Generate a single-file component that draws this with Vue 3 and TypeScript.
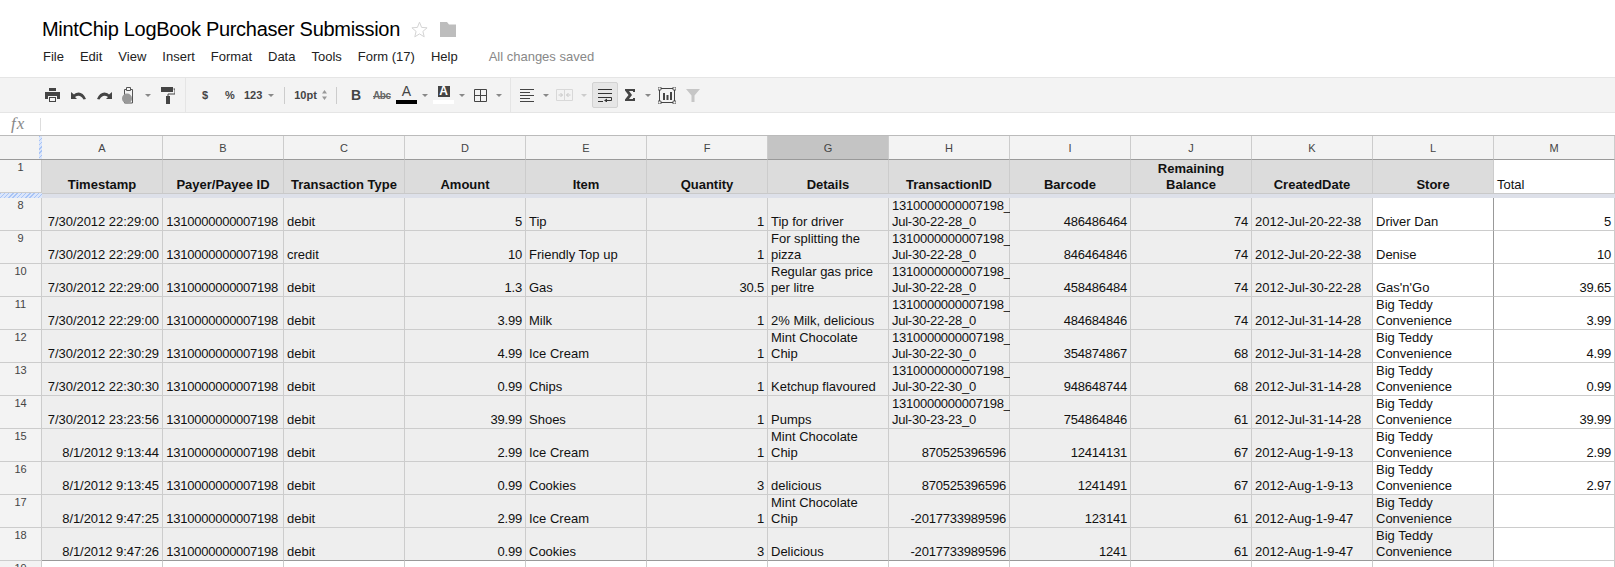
<script setup lang="ts">
interface Row {
  num: number
  cells: (string | number)[]
}
const columns = ['A', 'B', 'C', 'D', 'E', 'F', 'G', 'H', 'I', 'J', 'K', 'L', 'M']
const menus = ['File', 'Edit', 'View', 'Insert', 'Format', 'Data', 'Tools', 'Form (17)', 'Help']
const headers = ['Timestamp', 'Payer/Payee ID', 'Transaction Type', 'Amount', 'Item', 'Quantity', 'Details', 'TransactionID', 'Barcode', 'Remaining Balance', 'CreatedDate', 'Store']
const payer = '1310000000007198'
const tid = (s: string) => `${payer}_\nJul-30-${s}_0`
const teddy = 'Big Teddy Convenience'
const rows: Row[] = [
  [8, '7/30/2012 22:29:00', 'debit', 5, 'Tip', 1, 'Tip for driver', tid('22-28'), 486486464, 74, '2012-Jul-20-22-38', 'Driver Dan', 5],
  [9, '7/30/2012 22:29:00', 'credit', 10, 'Friendly Top up', 1, 'For splitting the pizza', tid('22-28'), 846464846, 74, '2012-Jul-20-22-38', 'Denise', 10],
  [10, '7/30/2012 22:29:00', 'debit', 1.3, 'Gas', 30.5, 'Regular gas price per litre', tid('22-28'), 458486484, 74, '2012-Jul-30-22-28', "Gas'n'Go", 39.65],
  [11, '7/30/2012 22:29:00', 'debit', 3.99, 'Milk', 1, '2% Milk, delicious', tid('22-28'), 484684846, 74, '2012-Jul-31-14-28', teddy, 3.99],
  [12, '7/30/2012 22:30:29', 'debit', 4.99, 'Ice Cream', 1, 'Mint Chocolate Chip', tid('22-30'), 354874867, 68, '2012-Jul-31-14-28', teddy, 4.99],
  [13, '7/30/2012 22:30:30', 'debit', 0.99, 'Chips', 1, 'Ketchup flavoured', tid('22-30'), 948648744, 68, '2012-Jul-31-14-28', teddy, 0.99],
  [14, '7/30/2012 23:23:56', 'debit', 39.99, 'Shoes', 1, 'Pumps', tid('23-23'), 754864846, 61, '2012-Jul-31-14-28', teddy, 39.99],
  [15, '8/1/2012 9:13:44', 'debit', 2.99, 'Ice Cream', 1, 'Mint Chocolate Chip', 870525396596, 12414131, 67, '2012-Aug-1-9-13', teddy, 2.99],
  [16, '8/1/2012 9:13:45', 'debit', 0.99, 'Cookies', 3, 'delicious', 870525396596, 1241491, 67, '2012-Aug-1-9-13', teddy, 2.97],
  [17, '8/1/2012 9:47:25', 'debit', 2.99, 'Ice Cream', 1, 'Mint Chocolate Chip', -2017733989596, 123141, 61, '2012-Aug-1-9-47', teddy, ''],
  [18, '8/1/2012 9:47:26', 'debit', 0.99, 'Cookies', 3, 'Delicious', -2017733989596, 1241, 61, '2012-Aug-1-9-47', teddy, ''],
].map((r) => {
  const [num, ts, ...rest] = r
  return { num: num as number, cells: [ts, payer, ...rest] as (string | number)[] }
})
function cellClass(row: Row, i: number): string[] {
  const c: string[] = ['cell']
  const v = row.cells[i]
  if (i === 0 || i === 1 || typeof v === 'number') c.push('right')
  if (i === 0) c.push('stamp')
  if (i === 1) c.push('payer')
  if (i === 7 && typeof v === 'string') c.push('tid')
  if (i < 11 || (i === 11 && row.num >= 17)) c.push('shaded')
  if (i === 11) c.push('edge')
  if (row.num === 18 && i <= 11) c.push('last')
  return c
}
</script>

<template>
  <div class="page">
    <header class="top">
      <div class="title-line">
        <h1 class="title">MintChip LogBook Purchaser Submission</h1>
        <svg class="star" width="17" height="17" viewBox="0 0 17 17"><path d="M8.5 1.2l2.1 5.2 5.5.4-4.2 3.6 1.3 5.4-4.7-2.9-4.7 2.9 1.3-5.4L.9 6.8l5.5-.4z" fill="none" stroke="#d4d4d4" /></svg>
        <svg class="folder" width="16" height="15" viewBox="0 0 16 15"><path d="M0 0h7l2 2.5h7V15H0z" fill="#bdbdbd" /></svg>
      </div>
      <nav class="menu">
        <span v-for="m in menus" :key="m">{{ m }}</span>
        <span class="saved">All changes saved</span>
      </nav>
    </header>

    <div class="toolbar">
      <svg class="g0" width="15" height="14" viewBox="0 0 15 14"><path d="M4 0h7v3H4zM0 4h15v7h-3V8H3v3H0zM4 9h7v5H4z" fill="#444" /><path d="M5 10h5v3H5z" fill="#f3f3f3" /></svg>
      <svg class="g11" width="15" height="9" viewBox="0 0 15 9"><path d="M0 1v7h6L4 6c3-2 6-2 8.500 2.500L15 8C12 1 7 0 3 3.500z" fill="#444" /></svg>
      <svg class="g11" width="15" height="9" viewBox="0 0 15 9"><path d="M15 1v7H9l2-2C8 4 5 4 2.500 8.500L0 8C3 1 8 0 12 3.500z" fill="#444" /></svg>
      <svg class="g10" width="13" height="18" viewBox="0 0 13 18"><path d="M2.500 3.500h8v13.500h-8z" fill="none" stroke="#555" /><path d="M4.500 1.500h4v3h-4z" fill="#f3f3f3" stroke="#555" /><ellipse cx="5" cy="12.500" rx="5" ry="5" fill="#999" /></svg>
      <i class="arrow g10"></i>
      <svg class="g10" width="14" height="17" viewBox="0 0 14 17"><path d="M0 0h12v5H0z" fill="#444" /><path d="M12.500 2H14v5H7v2.500" fill="none" stroke="#444" /><path d="M5 9h4v8H5z" fill="#444" /></svg>
      <i class="sep g10"></i>
      <b class="tx g15 w8">$</b>
      <b class="tx g16 w8">%</b>
      <b class="tx g11 w18">123</b>
      <i class="arrow g6"></i>
      <i class="sep short g10"></i>
      <b class="tx g9 w23">10pt</b>
      <svg class="g5" width="5" height="10" viewBox="0 0 5 10"><path d="M2.500 0L5 3.500H0zM2.500 10L0 6.500h5z" fill="#999" /></svg>
      <i class="sep short g9"></i>
      <b class="bold g14">B</b>
      <span class="abc g14">Abc</span>
      <span class="color g7"><span class="letter">A</span><i class="bar black"></i></span>
      <i class="arrow g5"></i>
      <span class="color g5"><span class="letter inv">A</span><i class="bar white"></i></span>
      <i class="arrow g5"></i>
      <svg class="g9" width="13" height="13" viewBox="0 0 13 13"><path d="M.5.500h12v12H.5zM6.500 0v13M0 6.500h13" fill="none" stroke="#444" /></svg>
      <i class="arrow g9"></i>
      <i class="sep g8"></i>
      <svg class="g9" width="14" height="13" viewBox="0 0 14 13"><path d="M0 .5h14M0 3.500h10M0 6.500h14M0 9.500h10M0 12.500h14" stroke="#444" /></svg>
      <i class="arrow g9"></i>
      <svg class="g7" width="17" height="12" viewBox="0 0 17 12"><path d="M.5.500h16v11H.5zM8.500 0v12" fill="none" stroke="#d8d8d8" /><path d="M2.500 6h4M4.500 4l2 2-2 2M14.500 6h-4M12.500 4l-2 2 2 2" fill="none" stroke="#c8c8c8" /></svg>
      <i class="arrow faint g8"></i>
      <span class="wrap g5">
        <svg width="14" height="13" viewBox="0 0 14 13"><path d="M0 .5h14M0 4.500h14M0 8.500h13.500v3H8M0 12.500h5" fill="none" stroke="#333" /><path d="M9 9.500v4l-3-2z" fill="#333" /></svg>
      </span>
      <svg class="g7" width="10" height="12" viewBox="0 0 10 12"><path d="M0 0h10v3H8V2H4l3 4-3 4h4V9h2v3H0V10.500L3.500 6 0 1.500z" fill="#444" /></svg>
      <i class="arrow g10"></i>
      <svg class="g7" width="18" height="17" viewBox="0 0 18 17"><path d="M1.500 1.500h15v14h-15z" fill="none" stroke="#444" /><path d="M0 0h3v3H0zM15 0h3v3h-3zM0 14h3v3H0zM15 14h3v3h-3z" fill="#f3f3f3" stroke="#444" stroke-width=".8" /><path d="M5 6h2v7H5zM8.500 8h2v5h-2zM12 5h2v8h-2z" fill="#444" /></svg>
      <svg class="g10" width="14" height="13" viewBox="0 0 14 13"><path d="M0 0h14L8.500 6.500V13h-3V6.500z" fill="#c6c6c6" /></svg>
    </div>

    <div class="formula">
      <span class="fx">fx</span>
      <i class="fx-sep"></i>
    </div>

    <div class="sheet">
      <div class="corner"><i class="hatch-v"></i></div>
      <div v-for="c in columns" :key="c" class="col-head" :class="{ active: c === 'G' }">{{ c }}</div>

      <div class="row-head">1</div>
      <div v-for="h in headers" :key="h" class="cell head">{{ h }}</div>
      <div class="cell total">Total</div>

      <div class="freeze-head"></div>
      <div class="freeze"></div>

      <template v-for="row in rows" :key="row.num">
        <div class="row-head">{{ row.num }}</div>
        <div v-for="(v, i) in row.cells" :key="i" :class="cellClass(row, i)">{{ v }}</div>
      </template>

      <div class="row-head stub">19</div>
      <div v-for="c in columns" :key="'s' + c" class="cell stub"></div>
    </div>
  </div>
</template>

<style scoped>
.page { width: 1615px; height: 567px; overflow: hidden; font-family: "Liberation Sans", Arial, sans-serif; color: #222; }
.top { height: 77px; padding-left: 42px; box-sizing: border-box; }
.title-line { display: flex; align-items: center; height: 46px; padding-top: 12px; box-sizing: border-box; }
.title { margin: 0; font-size: 20px; letter-spacing: -.3px; font-weight: 400; color: #000; line-height: 34px; }
.star { margin-left: 11px; }
.folder { margin-left: 12px; }
.menu { display: flex; gap: 16px; height: 20px; align-items: center; font-size: 13px; color: #222; padding-left: 1px; margin-top: 0; }
.saved { margin-left: 15px; color: #888; }

.toolbar { display: flex; align-items: center; height: 36px; box-sizing: border-box; background: #f3f3f3; border-top: 1px solid #e5e5e5; border-bottom: 1px solid #e5e5e5; padding-left: 45px; }
.g0 { margin-left: 0; } .g5 { margin-left: 5px; } .g6 { margin-left: 6px; } .g7 { margin-left: 7px; } .g8 { margin-left: 8px; }
.g9 { margin-left: 9px; } .g10 { margin-left: 10px; } .g11 { margin-left: 11px; } .g14 { margin-left: 14px; } .g15 { margin-left: 15px; } .g16 { margin-left: 16px; }
.toolbar svg { flex: none; display: block; }
.arrow { flex: none; width: 0; height: 0; border: 3px solid transparent; border-top: 3px solid #888; border-bottom: 0; }
.arrow.faint { border-top-color: #ccc; }
.sep { flex: none; width: 1px; align-self: stretch; background: #e5e5e5; }
.sep.short { align-self: center; height: 17px; background: #ccc; }
.tx { flex: none; font-size: 11px; font-weight: 700; color: #444; text-align: center; }
.w8 { width: 8px; } .w18 { width: 18px; } .w23 { width: 23px; }
.bold { flex: none; width: 8px; font: 700 14px "Liberation Sans", sans-serif; color: #444; }
.abc { flex: none; width: 16px; font-size: 10px; font-weight: 700; letter-spacing: -.4px; color: #666; text-decoration: line-through; }
.color { flex: none; display: flex; flex-direction: column; align-items: center; width: 21px; }
.letter { display: block; width: 14px; height: 11px; font-size: 14px; line-height: 11px; text-align: center; color: #444; }
.letter.inv { width: 12px; background: #444; color: #fff; font-weight: 700; font-size: 12px; }
.bar { display: block; width: 21px; height: 4px; margin-top: 3px; }
.bar.black { background: #000; }
.bar.white { background: #fff; }
.wrap { flex: none; display: flex; align-items: center; justify-content: center; width: 26px; height: 26px; box-sizing: border-box; background: #e6e6e6; border: 1px solid #d2d2d2; border-radius: 2px; }

.formula { display: flex; align-items: center; height: 22px; background: #fff; position: relative; }
.fx { width: 40px; padding-left: 11px; box-sizing: border-box; font: italic 17px "Liberation Serif", serif; letter-spacing: 1px; color: #888; }
.fx-sep { width: 1px; height: 13px; background: #ddd; }

.sheet { display: grid; grid-template-columns: 42px repeat(13, 121px); grid-template-rows: 24px 33px 5px repeat(11, 33px) 33px; border-top: 1px solid #bbb; font-size: 13px; line-height: 16px; color: #111; }
.corner { background: #f3f3f3; border-bottom: 1px solid #999; position: relative; }
.hatch-v { position: absolute; right: 0; top: 0; bottom: 0; width: 3px; background: repeating-linear-gradient(135deg, #a8c4f6 0 1px, #dbe6fb 1px 3px); }
.col-head { display: flex; align-items: center; justify-content: center; background: #f3f3f3; border-right: 1px solid #ccc; border-bottom: 1px solid #999; font-size: 11px; color: #444; }
.col-head.active { background: #c4c4c4; }
.row-head { display: flex; justify-content: center; background: #f3f3f3; border-right: 1px solid #ccc; border-bottom: 1px solid #ccc; font-size: 11px; line-height: 15px; color: #444; }
.cell { display: flex; align-items: flex-end; box-sizing: border-box; padding: 0 3px; background: #fff; border-right: 1px solid #ccc; border-bottom: 1px solid #ccc; white-space: pre-line; overflow: hidden; }
.cell.right { justify-content: flex-end; text-align: right; letter-spacing: -.2px; }
.cell.stamp { letter-spacing: -.05px; }
.cell.payer { padding-right: 5px; letter-spacing: -.25px; }
.cell.tid { letter-spacing: -.25px; overflow: visible; }
.cell.shaded { background: #eee; }
.cell.head { justify-content: center; text-align: center; background: #dcdcdc; font-weight: 700; border-bottom: 0; }
.cell.total { border-bottom: 0; }
.cell.edge { border-right: 1px solid #999; }
.cell.last { border-bottom: 1px solid #999; }
.freeze-head { background: repeating-linear-gradient(135deg, #a8c4f6 0 1px, #dbe6fb 1px 3px); }
.freeze { grid-column: 2 / -1; background: #dde0e9; border-top: 1px solid #c9c9c9; box-sizing: border-box; }
</style>

<style>
html, body { margin: 0; padding: 0; overflow: hidden; background: #fff; }
</style>
